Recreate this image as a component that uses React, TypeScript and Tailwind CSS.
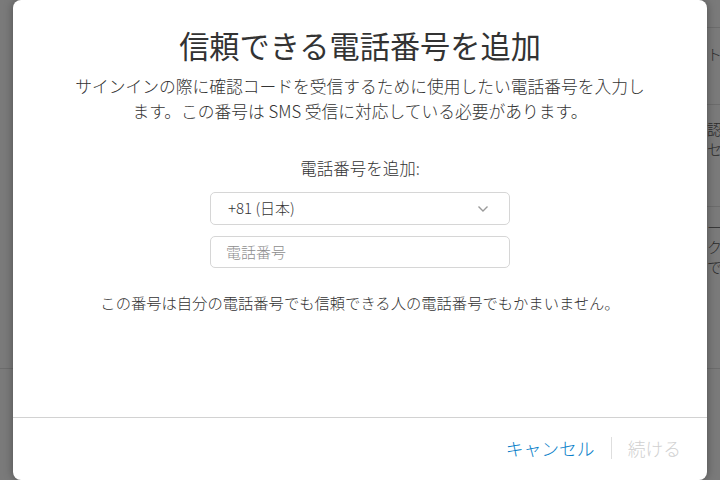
import { ReactElement } from 'react'

const jp = '[font-family:"Noto_Sans_CJK_JP","Noto_Sans",sans-serif]'

// page behind the dialog, dimmed by the overlay
const BackgroundPage = (): ReactElement => {
  return (
    <div className="h-[480px] w-[720px] overflow-hidden bg-[#7a7a7a] text-[15px] leading-[20px] text-[#2b2b2b]">
      <div className="ml-[707px] h-[28px] w-[300px] border-b border-[#6c6c6c]" />
      <div className="ml-[707px] flex h-[77px] w-[300px] flex-col border-b border-[#6c6c6c] pt-[16px]">
        <span>トラスト</span>
      </div>
      <div className="ml-[707px] flex h-[102px] w-[300px] flex-col border-b border-[#6c6c6c] pt-[14px]">
        <span>認証</span>
        <span>セキュリティ</span>
      </div>
      <div className="ml-[707px] flex h-[161px] w-[300px] flex-col pt-[10px]">
        <span>ー</span>
        <span>ク</span>
        <span>で</span>
      </div>
      <div className="h-px w-full bg-[#6c6c6c]" />
    </div>
  )
}

export default function App(): ReactElement {
  return (
    <div className={`relative h-[480px] w-[720px] overflow-hidden font-light ${jp}`}>
      <BackgroundPage />
      <div className="absolute inset-0 flex justify-center">
        <div className="flex h-[480px] w-[694px] flex-col rounded-[8px] bg-white shadow-[0_0_10px_rgba(0,0,0,0.35)]">
          <div className="flex flex-1 flex-col items-center">
            <h1 className="pt-[25px] text-[30.2px] leading-[40px] font-normal text-[#333333]">
              信頼できる電話番号を追加
            </h1>
            <p className="mt-[9px] text-center text-[16.75px] leading-[25px] whitespace-nowrap text-[#333333]">
              サインインの際に確認コードを受信するために使用したい電話番号を入力し
              <br />
              ます。この番号は SMS 受信に対応している必要があります。
            </p>
            <div className="mt-[32px] text-[16.5px] leading-[24px] text-[#333333]">電話番号を追加:</div>
            <div className="mt-[12px] flex h-[33px] w-[300px] items-center justify-between rounded-[5px] border border-[#d6d6d6] pr-[20px] pl-[17px]">
              <span className="text-[15px] text-[#333333]">+81 (日本)</span>
              <svg width="12" height="8" viewBox="0 0 12 8" fill="none">
                <path d="M1.5 1.5 L6 6 L10.5 1.5" stroke="#9a9a9a" strokeWidth="1.4" />
              </svg>
            </div>
            <div className="mt-[11px] flex h-[32px] w-[300px] items-center rounded-[5px] border border-[#d6d6d6] pl-[15px]">
              <span className="text-[15px] text-[#8e8e8e]">電話番号</span>
            </div>
            <p className="mt-[23px] text-[15.3px] leading-[22px] text-[#333333]">
              この番号は自分の電話番号でも信頼できる人の電話番号でもかまいません。
            </p>
          </div>
          <div className="flex h-[63px] items-center justify-end border-t border-[#d2d2d2] pr-[26px] pb-[2px]">
            <span className="text-[17.8px] text-[#0a7fc9]">キャンセル</span>
            <span className="mx-[16px] h-[22px] w-px bg-[#dedede]" />
            <span className="text-[17.8px] text-[#d0d0d0]">続ける</span>
          </div>
        </div>
      </div>
    </div>
  )
}
